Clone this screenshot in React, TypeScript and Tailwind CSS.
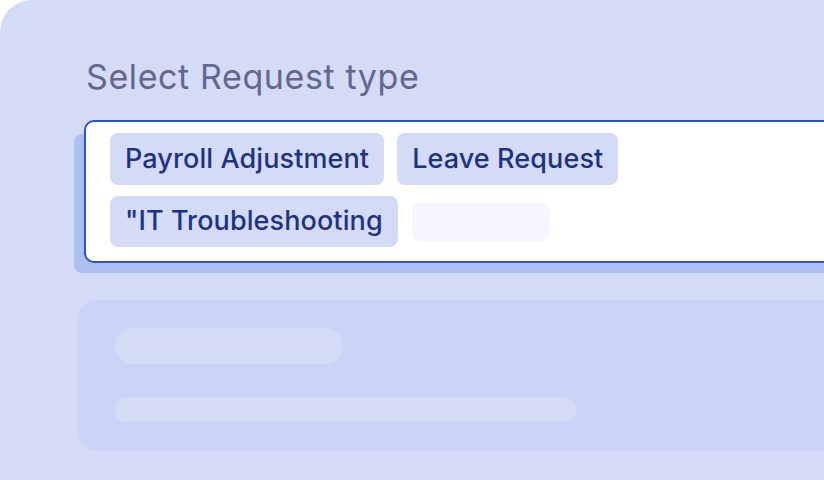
export default function App() {
  return (
    <div className="w-[824px] h-[480px] bg-white overflow-hidden" style={{ fontFamily: "Inter, 'Noto Sans', sans-serif" }}>
      <div className="w-[860px] h-[520px] bg-[#d4dbf7] rounded-tl-[32px] rounded-tr-[36px] -mr-[36px] pl-[84px] pt-[57px]">
        <div className="ml-[2px] text-[34px] leading-[40px] text-[#63678f] tracking-[0.6px]">Select Request type</div>
        <div className="mt-[23px] w-[800px] bg-white border-2 border-[#2552d9] rounded-[10px] pl-[24px] pt-[11px] pb-[14px] shadow-[-12px_12px_0_-2px_#adbff0] flex flex-col gap-[11px]">
          <div className="flex items-center gap-[13px]">
            <div className="h-[52px] px-[15px] flex items-center rounded-[8px] bg-[#d4dbf7] text-[27px] font-medium tracking-[0.1px] text-[#1d3285]">Payroll Adjustment</div>
            <div className="h-[52px] px-[15px] flex items-center rounded-[8px] bg-[#d4dbf7] text-[27px] font-medium tracking-[0.1px] text-[#1d3285]">Leave Request</div>
          </div>
          <div className="flex items-center gap-[14px]">
            <div className="h-[51px] px-[15px] flex items-center rounded-[8px] bg-[#d4dbf7] text-[27px] font-medium tracking-[0.1px] text-[#1d3285]">"IT Troubleshooting</div>
            <div className="h-[38px] w-[138px] rounded-[8px] bg-[#f6f7fe]"></div>
          </div>
        </div>
        <div className="mt-[37px] -ml-[6px] w-[800px] h-[150px] rounded-[18px] bg-[#c9d4f6] pl-[37px] pt-[28px] flex flex-col gap-[34px]">
          <div className="w-[228px] h-[36px] rounded-full bg-[#d4dbf7]"></div>
          <div className="w-[461px] h-[24px] rounded-full bg-[#d4dbf7]"></div>
        </div>
      </div>
    </div>
  );
}
